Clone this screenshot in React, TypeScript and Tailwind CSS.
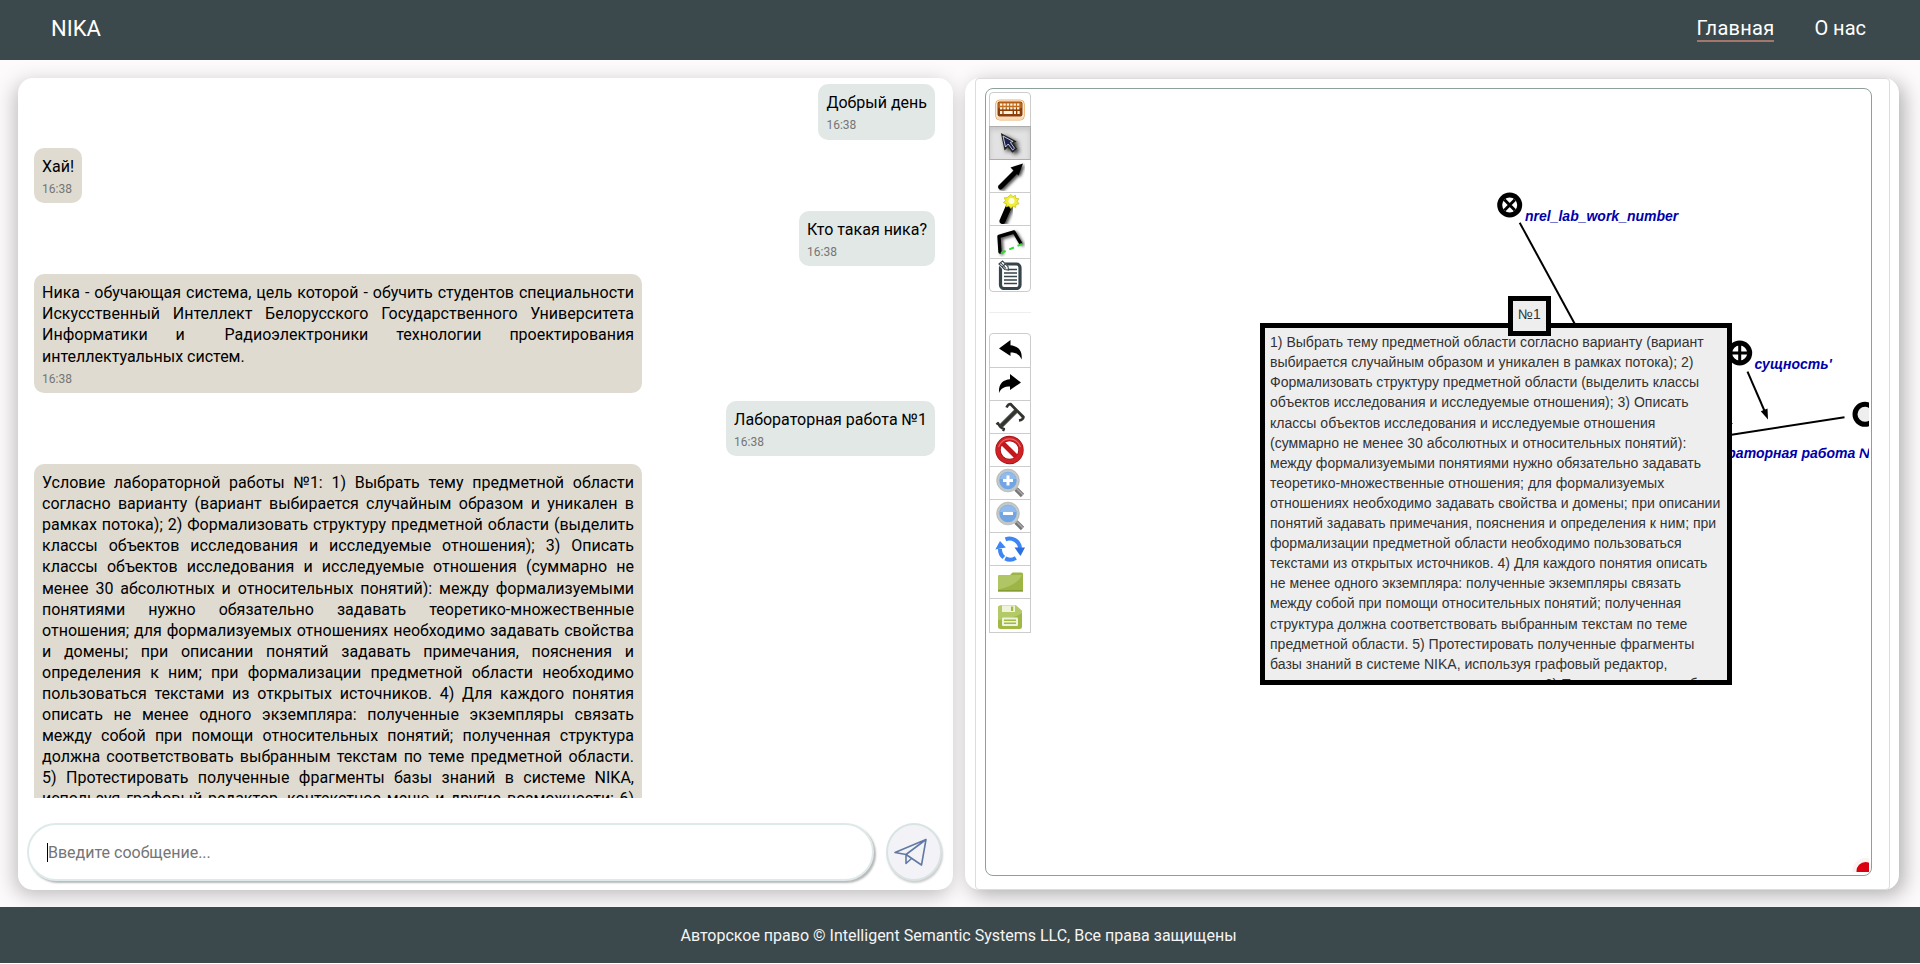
import React from 'react';

const TASK =
  'Выбрать тему предметной области согласно варианту (вариант выбирается случайным образом и уникален в рамках потока); 2) Формализовать структуру предметной области (выделить классы объектов исследования и исследуемые отношения); 3) Описать классы объектов исследования и исследуемые отношения (суммарно не менее 30 абсолютных и относительных понятий): между формализуемыми понятиями нужно обязательно задавать теоретико-множественные отношения; для формализуемых отношениях необходимо задавать свойства и домены; при описании понятий задавать примечания, пояснения и определения к ним; при формализации предметной области необходимо пользоваться текстами из открытых источников. 4) Для каждого понятия описать не менее одного экземпляра: полученные экземпляры связать между собой при помощи относительных понятий; полученная структура должна соответствовать выбранным текстам по теме предметной области. 5) Протестировать полученные фрагменты базы знаний в системе NIKA, используя графовый редактор, контекстное меню и другие возможности; 6) Протестировать на базе знаний.';

function Message({ mine, children }: { mine?: boolean; children: React.ReactNode }) {
  return (
    <div
      className={
        mine
          ? 'self-end shrink-0 max-w-[608px] rounded-[10px] bg-[#e2e8e6] px-2 pt-2 pb-[1.2px]'
          : 'self-start shrink-0 max-w-[608px] rounded-[10px] bg-[#dfdbd0] px-2 pt-2 pb-[1.2px]'
      }
    >
      <div className="text-justify text-base leading-[21.1px] text-black">{children}</div>
      <div className="text-xs leading-[25px] text-[#757575]">16:38</div>
    </div>
  );
}

const svg = 'block h-[30px] w-[30px]';

const Keyboard = () => (
  <svg className={svg} viewBox="0 0 30 30">
    <rect x="0.7" y="5" width="28.6" height="20" rx="4" fill="#fff7ea" stroke="#e9ae6c" strokeWidth="1" />
    <path d="M2 21.500h26v1q0 2-3 2H5q-3 0-3-2z" fill="#f7dcb5" />
    <rect x="2.500" y="6.500" width="25" height="15" rx="2" fill="#8a3f08" />
    <rect x="3.200" y="7.200" width="23.600" height="6" rx="1.500" fill="#c06a1e" />
    <g fill="#fff3dd">
      {[5, 8.4, 11.8, 15.2, 18.6, 22].map((x) => (
        <g key={x}>
          <rect x={x} y="8.500" width="2.300" height="2.200" />
          <rect x={x} y="12.200" width="2.300" height="2.200" />
        </g>
      ))}
      <rect x="5" y="16" width="2.300" height="3" />
      <rect x="8.600" y="16" width="9" height="3" />
      <rect x="19" y="16" width="2" height="3" />
      <rect x="22.400" y="16" width="2.300" height="3" />
    </g>
  </svg>
);
const Cursor = () => (
  <svg className={svg} viewBox="0 0 30 30">
    <defs>
      <filter id="sh" x="-50%" y="-50%" width="200%" height="200%">
        <feDropShadow dx="2" dy="1.500" stdDeviation="1.400" floodOpacity="0.7" />
      </filter>
      <filter id="glow" x="-50%" y="-50%" width="200%" height="200%">
        <feDropShadow dx="2.500" dy="2" stdDeviation="2" floodOpacity="0.85" />
      </filter>
    </defs>
    <path filter="url(#glow)" d="M7 6.500l3 14.500 3-3 4.500 5.500 3.500-3-4-5.500 3-1.500z" fill="#1d2450" stroke="#222" strokeWidth="1.600" />
    <path d="M8 8l2.500 11 2.700-3 4.500 6 1.800-1.700-4.200-6 2.800-.8z" fill="#1b2250" stroke="#d8dae6" strokeWidth="0.9" />
  </svg>
);
const Pen = () => (
  <svg className={svg} viewBox="0 0 30 30">
    <g filter="url(#sh)">
      <path d="M5.500 26L21 10.500" stroke="#000" strokeWidth="5" strokeLinecap="round" />
      <path d="M28 2.500l-4.500 12-8-8z" fill="#000" />
    </g>
  </svg>
);
const Wand = () => (
  <svg className={svg} viewBox="0 0 30 30">
    <path filter="url(#sh)" d="M7.500 27L14 12" stroke="#000" strokeWidth="6" strokeLinecap="round" />
    <path
      d="M16 .5l1.800 2.300 2.600-1.600.4 3.100 3 .4-1.500 2.600 1.700 2.500-3 .7-.3 3-2.800-1.300-2.100 2.200-1.800-2.500-2.900.9.200-3-2.900-1.200 2.200-2.100-1.400-2.700 3-.2z"
      fill="#f1ee3a"
      stroke="#c9c41c"
      strokeWidth="0.8"
    />
    <circle cx="16.500" cy="7" r="3" fill="#fffde0" />
  </svg>
);
const Contour = () => (
  <svg className={svg} viewBox="0 0 30 30">
    <path filter="url(#sh)" d="M5 25L4 9.500 19 5 25.500 16" fill="none" stroke="#000" strokeWidth="3.400" strokeLinejoin="round" strokeLinecap="round" />
    <path d="M6 26L27 17" stroke="#2bdc2b" strokeWidth="2" strokeDasharray="5 4" />
  </svg>
);
const Note = () => (
  <svg className={svg} viewBox="0 0 30 30">
    <rect x="5.500" y="4" width="19.500" height="24.500" rx="3.500" fill="#fff" stroke="#36444c" strokeWidth="3.200" />
    <path d="M13 9.500h9M9 13h13M9 16.500h13M9 20h13M9 23.500h13" stroke="#36444c" strokeWidth="1.300" />
    <path d="M2.500 4l5-4 6.500 7v4h-5z" fill="#fff" />
    <path d="M4 4l3.500-3 5.500 5.500.5 3.500-3.700-.5zM5.500 2.500l5.500 6M7.500 6.500l3.500-3" fill="none" stroke="#36444c" strokeWidth="1.100" />
  </svg>
);
const Undo = () => (
  <svg className={svg} viewBox="0 0 30 30">
    <path d="M4 12.500L15.500 4v5.200C22 9.800 28 14 26.500 23.500 25 18.500 21 16.500 15.500 16.500V20z" fill="#000" />
  </svg>
);
const Redo = () => (
  <svg className={svg} viewBox="0 0 30 30">
    <path d="M26 13.500L15 5v5.200C8.500 10.800 3.500 14 4 24 6 19 9.500 17.500 15 17.500V21z" fill="#000" />
  </svg>
);
const TextTool = () => (
  <svg className={svg} viewBox="0 0 30 30">
    <g fill="none" stroke="#32352f" strokeLinejoin="round">
      <path d="M21 9L6 24" stroke="#6f7468" strokeWidth="4.600" />
      <path d="M21 9L6 24" strokeWidth="3.200" />
      <path d="M11.500 5.500Q13 2 15.500 2L28.500 15Q28 18 24 18.500M15.500 2l12.500 13" strokeWidth="2.600" />
      <path d="M1.500 22.500l1.500-1.500q2 5 6 6l-1 2" strokeWidth="2.400" />
    </g>
  </svg>
);
const Ban = () => (
  <svg className={svg} viewBox="0 0 30 30">
    <circle cx="14.500" cy="15" r="11.500" fill="#fff" stroke="#a30f12" strokeWidth="5.400" />
    <path d="M6.500 7l16 16" stroke="#c4171b" strokeWidth="4.800" />
    <circle cx="14.500" cy="15" r="11.500" fill="none" stroke="#cf2226" strokeWidth="4" />
    <path d="M3.500 12a11.500 11.500 0 0 1 22 0" fill="none" stroke="#e36a6b" strokeWidth="1.200" />
  </svg>
);
const Zoom = ({ plus }: { plus?: boolean }) => (
  <svg className={svg} viewBox="0 0 30 30">
    <path d="M21 21l6.500 6.500" stroke="#777" strokeWidth="4.600" />
    <path d="M21.500 20.500l6.500 6.500" stroke="#aaa" strokeWidth="1.500" />
    <circle cx="13" cy="12.500" r="10" fill="#72a5e4" stroke="#c3c8c8" strokeWidth="2.600" />
    <circle cx="13" cy="12.500" r="11.400" fill="none" stroke="#a3a8a8" strokeWidth="0.6" />
    <path d="M4.800 11a8.400 8.400 0 0 1 16.500 0z" fill="#91bbed" />
    <path d="M8 12.500h10" stroke="#fff" strokeWidth="3" />
    {plus && <path d="M13 7.500v10" stroke="#fff" strokeWidth="3" />}
  </svg>
);
const Refresh = () => (
  <svg className={svg} viewBox="0 0 30 30">
    <g fill="none" stroke="#3d86f4" strokeWidth="4">
      <path d="M10.500 5.400A10.500 10.500 0 0 1 25 14" />
      <path d="M5 15A10.500 10.500 0 0 0 8.800 23.500" />
      <path d="M10.200 24.400A10.500 10.500 0 0 0 20.800 23.800" />
    </g>
    <path d="M19.500 13.500H30l-4.500 8.500z" fill="#2b6fe0" />
    <path d="M0.300 15.500L5 7l5.800 6.500z" fill="#3d86f4" />
  </svg>
);
const Folder = () => (
  <svg className={svg} viewBox="0 0 30 30">
    <path d="M3 9.500q0-1.500 1.500-1.500H15l2.500-2.500h9q1.500 0 1.500 1.500V24.500H3z" fill="#9db545" />
    <path d="M3 9.500q0-1.500 1.500-1.500H27Q22 18.500 3 22.500z" fill="#b0c665" />
    <path d="M3 23h25v1.500H3z" fill="#879c36" />
  </svg>
);
const Save = () => (
  <svg className={svg} viewBox="0 0 30 30">
    <path d="M3 7q0-2.500 2.500-2.500H21L27 10v15.500q0 2.500-2.500 2.500h-19Q3 28 3 25.500z" fill="#a0b844" />
    <path d="M3 7q0-2.500 2.500-2.500H21L27 10v2Q18 18 3 19z" fill="#b4c968" />
    <rect x="7" y="4.500" width="13" height="6.500" fill="#eef3da" />
    <rect x="16" y="5.500" width="2.200" height="4.500" fill="#a0b844" />
    <rect x="7" y="16.500" width="16" height="8.500" rx="1" fill="#eef3da" />
    <path d="M9 19.200h12M9 22.200h12" stroke="#a0b844" strokeWidth="1.400" />
  </svg>
);

function Tool({
  first,
  last,
  tall,
  active,
  children,
}: {
  first?: boolean;
  last?: boolean;
  tall?: boolean;
  active?: boolean;
  children: React.ReactNode;
}) {
  let cls = 'flex w-[42px] items-center justify-center border ';
  if (first) cls += 'h-[35px] rounded-t ';
  else cls += tall ? '-mt-px h-[35px] ' : '-mt-px h-[34px] ';
  if (last) cls += 'rounded-b ';
  cls += active ? 'relative z-10 border-[#adadad] bg-[#e2e2e2] shadow-[inset_0_3px_5px_rgba(0,0,0,0.12)]' : 'border-[#ccc] bg-white';
  return <button className={cls}>{children}</button>;
}

function Toolbar() {
  return (
    <div className="flex w-[42px] shrink-0 flex-col">
      <Tool first><Keyboard /></Tool>
      <Tool active><Cursor /></Tool>
      <Tool><Pen /></Tool>
      <Tool><Wand /></Tool>
      <Tool><Contour /></Tool>
      <Tool last><Note /></Tool>
      <hr className="my-5 border-t border-[#eee]" />
      <Tool first><Undo /></Tool>
      <Tool><Redo /></Tool>
      <Tool><TextTool /></Tool>
      <Tool><Ban /></Tool>
      <Tool><Zoom plus /></Tool>
      <Tool><Zoom /></Tool>
      <Tool><Refresh /></Tool>
      <Tool><Folder /></Tool>
      <Tool tall><Save /></Tool>
    </div>
  );
}

function Graph() {
  return (
    <div className="relative h-[783px] w-[838px] overflow-hidden">
      <svg className="absolute inset-0" width="838" height="783" viewBox="1031 89 838 783">
        <g stroke="#000" strokeWidth="2">
          <path d="M1519.700 222.700L1577 328" />
          <path d="M1747.500 371.700L1765 412" />
          <path d="M1725 435.800L1844.500 417.300" />
        </g>
        <path d="M1768 419.500l-7.200-8.200 6.700-2.900z" />
        <path d="M1733 423.500l-4-2v4z" />
        <g fill="#fff" stroke="#000" strokeWidth="5">
          <circle cx="1509.700" cy="205" r="10" />
          <circle cx="1739.700" cy="353" r="10" />
          <circle cx="1865" cy="414.300" r="10" fill="#eee" />
        </g>
        <g stroke="#000" strokeWidth="3">
          <path d="M1504.500 199.800l10.400 10.400M1514.900 199.800l-10.400 10.400" />
          <path d="M1739.700 345v16M1731.700 353h16" />
        </g>
        <g className="font-['Liberation_Sans',sans-serif] text-[14px] font-bold italic" fill="#0000aa">
          <text x="1525" y="220.500">nrel_lab_work_number</text>
          <text x="1754.500" y="369">сущность'</text>
          <text x="1692.500" y="458">Лабораторная работа №1</text>
        </g>
        <circle cx="1865.500" cy="871" r="13" fill="#fbf3f3" />
        <circle cx="1865.500" cy="871" r="9" fill="#d9000f" />
      </svg>
      <div className="absolute left-[229px] top-[234px] h-[362px] w-[472px] overflow-hidden border-[5px] border-black bg-[#eee] px-[5px] pt-[4.2px] font-['Liberation_Sans',sans-serif] text-[14.06px] leading-[20.1px] text-[#333]">
        1) {TASK}
      </div>
      <div className="absolute left-[477px] top-[207px] flex h-[40px] w-[43px] items-center justify-center border-[5px] border-black bg-[#eee] pb-1 font-['Liberation_Sans',sans-serif] text-[14px] leading-[20px] text-[#333]">
        №1
      </div>
    </div>
  );
}

export default function App() {
  return (
    <div className="flex h-[963px] w-[1920px] flex-col overflow-hidden bg-[#fcfafa] font-['Roboto',sans-serif]">
      <header className="flex h-[60px] shrink-0 items-start justify-between bg-[#3b494c] pl-[51px] pr-[54px] text-white">
        <div className="pt-[15px] text-[22px] leading-[27px]">NIKA</div>
        <nav className="flex gap-[40px] pt-[16px] text-[20px] leading-[24px]">
          <a className="border-b-2 border-[#a5776a] tracking-[0.25px]">Главная</a>
          <a>О нас</a>
        </nav>
      </header>

      <main className="flex h-[847px] shrink-0 gap-3 pl-[18px] pt-[18px]">
        <section className="flex h-[812px] w-[935px] flex-col rounded-[15px] bg-white shadow-[-3px_5px_20px_rgba(0,0,0,0.25)]">
          <div className="flex h-[720px] flex-col gap-2 overflow-hidden pl-4 pr-[18px] pt-[6.4px]">
            <Message mine>Добрый день</Message>
            <Message>Хай!</Message>
            <Message mine>Кто такая ника?</Message>
            <Message>
              Ника - обучающая система, цель которой - обучить студентов специальности Искусственный Интеллект
              Белорусского Государственного Университета Информатики и <span className="ml-3">Радиоэлектроники</span>{' '}
              технологии проектирования интеллектуальных систем.
            </Message>
            <Message mine>Лабораторная работа №1</Message>
            <Message>
              Условие лабораторной работы <span className="inline-block [text-align-last:left]">№1:</span> 1) {TASK}
            </Message>
          </div>
          <div className="flex gap-[12px] pl-[9px] pt-[25px]">
            <div className="flex h-[58px] w-[847px] items-center rounded-full border-2 border-[#deeaea] bg-white pl-[18px] pt-px text-base text-[#757575] shadow-[2px_2px_2px_rgba(0,0,0,0.28)]">
              <span className="h-[19px] w-px bg-black" />
              <span>Введите сообщение...</span>
            </div>
            <button className="flex h-[58px] w-[56px] items-center justify-center rounded-[50%] border-2 border-[#d8e4e3] bg-[#f3f3f7] pr-[8px] shadow-[1px_2px_2px_rgba(0,0,0,0.2)]">
              <svg width="33" height="28" viewBox="0 0 33 28" fill="none" stroke="#6279a5" strokeWidth="1.600" strokeLinejoin="round">
                <path d="M1 14.500L32 1.500 27.500 27 12 16.500zM12 16.500L32 1.500M12 16.500v9l5.500-5" />
              </svg>
            </button>
          </div>
        </section>

        <section className="h-[812px] w-[934px] rounded-[15px] bg-white px-[10px] shadow-[5px_5px_20px_rgba(0,0,0,0.3)]">
          <div className="h-[812px] w-[915px] rounded border border-[#ddd] pl-[9px] pt-[9px]">
            <div className="flex h-[788px] w-[887px] rounded-[8px] border border-[#8fa09b] pl-[3px] pt-[3px]">
              <Toolbar />
              <div className="-mt-[3px]">
                <Graph />
              </div>
            </div>
          </div>
        </section>
      </main>

      <footer className="flex h-[56px] shrink-0 items-center justify-center bg-[#3b494c] pr-[3px] pt-px text-base text-[#f5f5f5]">
        Авторское право © Intelligent Semantic Systems LLC, Все права защищены
      </footer>
    </div>
  );
}
